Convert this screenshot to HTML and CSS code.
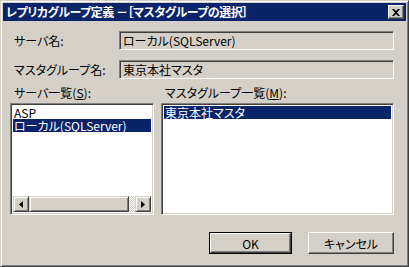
FILE: index.html
```html
<!DOCTYPE html>
<html lang="ja">
<head>
<meta charset="utf-8">
<link rel="stylesheet" href="styles.css">
</head>
<body>
<div class="window">
  <div class="titlebar">
    <span class="title">レプリカグループ定義 －［マスタグループの選択］</span>
    <span class="close">
      <svg width="8" height="7" viewBox="0 0 8 7"><path d="M0 0h2l2 2 2-2h2L5 3.5 8 7H6L4 5 2 7H0l3-3.5z" fill="#000"/></svg>
    </span>
  </div>
  <div class="content">
    <div class="row">
      <span class="label">サーバ名:</span>
      <span class="field">ローカル(SQLServer)</span>
    </div>
    <div class="row">
      <span class="label">マスタグループ名:</span>
      <span class="field">東京本社マスタ</span>
    </div>
    <div class="lists">
      <div class="col left">
        <div class="caption">サーバ一覧(<u>S</u>):</div>
        <div class="listbox">
          <div class="items">
            <div class="item">ASP</div>
            <div class="item sel">ローカル(SQLServer)</div>
          </div>
          <div class="hscroll">
            <span class="sbtn"><svg width="4" height="7" viewBox="0 0 4 7"><path d="M4 0v7L0 3.5z" fill="#000"/></svg></span>
            <span class="thumb"></span>
            <span class="track"></span>
            <span class="sbtn"><svg width="4" height="7" viewBox="0 0 4 7"><path d="M0 0v7l4-3.5z" fill="#000"/></svg></span>
          </div>
        </div>
      </div>
      <div class="col right">
        <div class="caption">マスタグループ一覧(<u>M</u>):</div>
        <div class="listbox">
          <div class="items">
            <div class="item sel">東京本社マスタ</div>
          </div>
        </div>
      </div>
    </div>
    <div class="buttons">
      <span class="btn default"><span class="btn-in">OK</span></span>
      <span class="btn cancel"><span class="btn-in">キャンセル</span></span>
    </div>
  </div>
</div>
</body>
</html>
```
FILE: styles.css
```css
html, body {
  margin: 0;
  padding: 0;
  background: #d4d0c8;
}
body {
  font-family: "Noto Sans CJK JP", "Noto Sans", sans-serif;
  font-size: 12px;
  color: #000;
  font-feature-settings: "palt";
}
.window {
  box-sizing: border-box;
  width: 409px;
  height: 267px;
  background: #d4d0c8;
  border: 1px solid;
  border-color: #d4d0c8 #404040 #404040 #d4d0c8;
  box-shadow: inset 1px 1px #fff, inset -1px -1px #808080;
  padding: 2px;
  display: flex;
  flex-direction: column;
}
.titlebar {
  height: 18px;
  background: #0a246a;
  display: flex;
  align-items: center;
  justify-content: space-between;
  padding: 0 2px 0 3px;
}
.title {
  color: #fff;
  font-weight: bold;
  letter-spacing: -0.5px;
  line-height: 18px;
  white-space: nowrap;
}
.close {
  box-sizing: border-box;
  width: 16px;
  height: 14px;
  background: #d4d0c8;
  border: 1px solid;
  border-color: #fff #404040 #404040 #fff;
  box-shadow: inset -1px -1px #808080;
  display: flex;
  align-items: center;
  justify-content: center;
}
.content {
  flex: 1;
  display: flex;
  flex-direction: column;
  padding: 0 12px 0 7px;
}
.row {
  display: flex;
  align-items: center;
  height: 19px;
  margin-top: 10px;
}
.label {
  width: 109px;
  padding-left: 4px;
  box-sizing: border-box;
}
.field {
  flex: 1;
  box-sizing: border-box;
  height: 19px;
  border: 1px solid;
  border-color: #808080 #fff #fff #808080;
  box-shadow: inset 1px 1px #404040, inset -1px -1px #d4d0c8;
  padding: 0 3px;
  line-height: 17px;
  white-space: nowrap;
}
.lists {
  display: flex;
  gap: 7px;
  margin-top: 6px;
}
.col { display: flex; flex-direction: column; }
.col.left { width: 144px; }
.col.right { flex: 1; }
.caption {
  height: 18px;
  line-height: 16px;
  padding-left: 4px;
  white-space: nowrap;
}
.caption u { text-decoration-thickness: 1px; text-underline-offset: 1px; }
.listbox {
  box-sizing: border-box;
  height: 112px;
  background: #fff;
  border: 1px solid;
  border-color: #808080 #fff #fff #808080;
  box-shadow: inset 1px 1px #404040, inset -1px -1px #d4d0c8;
  padding: 2px;
  display: flex;
  flex-direction: column;
}
.items { flex: 1; }
.item {
  height: 13px;
  line-height: 13px;
  padding-left: 1px;
  white-space: nowrap;
}
.item.sel {
  background: #0a246a;
  color: #fff;
}
.hscroll {
  display: flex;
  height: 16px;
}
.sbtn, .thumb {
  box-sizing: border-box;
  background: #d4d0c8;
  border: 1px solid;
  border-color: #d4d0c8 #404040 #404040 #d4d0c8;
  box-shadow: inset 1px 1px #fff, inset -1px -1px #808080;
}
.sbtn {
  width: 16px;
  height: 16px;
  display: flex;
  align-items: center;
  justify-content: center;
}
.thumb { width: 100px; height: 16px; }
.track {
  flex: 1;
  background: repeating-conic-gradient(#fff 0 25%, #d4d0c8 0 50%) 0 0 / 2px 2px;
}
.buttons {
  display: flex;
  justify-content: flex-end;
  gap: 16px;
  margin-top: 17px;
}
.btn {
  box-sizing: border-box;
  height: 22px;
  background: #d4d0c8;
  display: flex;
}
.btn-in {
  flex: 1;
  box-sizing: border-box;
  border: 1px solid;
  border-color: #fff #404040 #404040 #fff;
  box-shadow: inset -1px -1px #808080;
  display: flex;
  align-items: center;
  justify-content: center;
}
.btn.default { width: 83px; border: 1px solid #000; }
.btn.cancel { width: 86px; }
```
